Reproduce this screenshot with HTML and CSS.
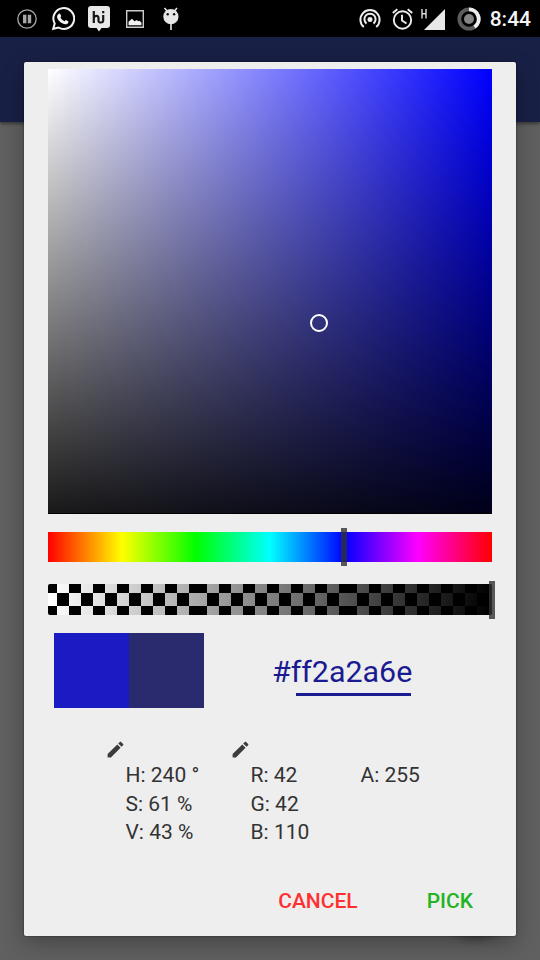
FILE: index.html
```html
<!DOCTYPE html>
<html lang="en">
<head>
<meta charset="utf-8">
<title>Color picker</title>
<link rel="stylesheet" href="styles.css">
</head>
<body>
<header class="status">
  <div class="notifications">
    <svg class="i-pause" width="20" height="20" viewBox="0 0 20 20"><circle cx="10" cy="10" r="9.2" fill="none" stroke="#a8a8a8" stroke-width="1.300"/><path d="M6 5.800h3.400v8.400H6zM10.800 5.800h3.400v8.400h-3.400z" fill="#a8a8a8"/></svg>
    <svg class="i-phone" width="24" height="24" viewBox="0 0 24 24"><path d="M2.2 21.8 3.7 16.600A10.400 10.400 0 1 1 7.500 20.500Z" fill="none" stroke="#f2f2f2" stroke-width="2"/><path d="M7.200 7.300c.8-1.100 1.900-.9 2.200-.1l.8 1.900c.2.5-.8 1.200-.7 1.500.9 1.700 2.200 2.900 4 3.600.5.200 1-1.300 1.500-1.100l2.200 1.100c.6.3.1 2-.8 2.600-1.400.9-3.200.5-5.200-.5-2.500-1.300-4.500-3.900-5-5.600-.4-1.400.1-2.600 1-3.400z" fill="#f2f2f2"/></svg>
    <svg class="i-hi" width="24" height="27" viewBox="0 0 24 27"><path d="M4 1h16a3 3 0 0 1 3 3v16a3 3 0 0 1-3 3h-5.500L12 26.500 9.500 23H4a3 3 0 0 1-3-3V4a3 3 0 0 1 3-3z" fill="#e8e8e8"/><path d="M6.800 6v12M6.800 13c1-3 4.700-3 4.700.3v2.500c0 2.300 4.700 2.300 4.700-.3V10M16.200 6v2.200" fill="none" stroke="#171717" stroke-width="2.200"/></svg>
    <svg class="i-image" width="18" height="18" viewBox="0 0 18 18"><path d="M.7.7h16.600v16.600H.7z" fill="none" stroke="#ccc" stroke-width="1.400"/><path d="M2.500 15.200v-3.500l3.500-3 2.500 2.600 2.500-1.300 1 1.300 1.500-.5 2 2v2.400z" fill="#f2f2f2"/></svg>
    <svg class="i-droid" width="18" height="24" viewBox="0 0 18 24"><path d="m2.500 1 3 3.500M15 1l-3 3.500M9 17v6" stroke="#e6e6e6" stroke-width="1.600"/><circle cx="8.900" cy="9.700" r="7.600" fill="#e6e6e6"/><circle cx="5.700" cy="7.300" r="1.200" fill="#111"/><circle cx="12.100" cy="7.300" r="1.200" fill="#111"/></svg>
  </div>
  <div class="system">
    <svg class="i-cast" width="22" height="22" viewBox="0 0 22 22" fill="none" stroke="#eee" stroke-width="2"><path d="M4.800 19A9.600 9.600 0 1 1 17.200 19M7.500 15.600A5.600 5.600 0 1 1 14.500 15.600"/><circle cx="11" cy="11.500" r="2.500" fill="#eee" stroke="none"/></svg>
    <svg class="i-alarm" width="21" height="22" viewBox="0 0 21 22" fill="none" stroke="#eee" stroke-width="1.900"><circle cx="10.500" cy="12" r="8.700"/><path d="M.8 5 5.300 1.200M20.200 5l-4.500-3.800M10 6.800v5.700l4.500 3"/></svg>
    <svg class="i-network" width="6" height="10" viewBox="0 0 6 10"><path d="M1 0v9.500M5 0v9.500M1 4.700h4" fill="none" stroke="#ddd" stroke-width="1.400"/></svg>
    <svg class="i-signal" width="21" height="21" viewBox="0 0 21 21"><path d="M21 0v21H0z" fill="#e8e8e8"/></svg>
    <svg class="i-battery" width="24" height="24" viewBox="0 0 24 24"><circle cx="12" cy="12" r="9.700" fill="none" stroke="#5c5c5c" stroke-width="3.800"/><path d="M12 2.300A9.700 9.700 0 0 1 17.500 20" fill="none" stroke="#eee" stroke-width="3.800"/><circle cx="12" cy="12" r="5" fill="#858585"/></svg>
    <span class="clock">8:44</span>
  </div>
</header>
<div class="appbar"></div>
<div class="fab"></div>
<main class="dialog">
  <div class="field"><i class="cursor"></i></div>
  <div class="hue"><i class="thumb hue-thumb"></i></div>
  <div class="alpha">
    <svg width="444" height="31" viewBox="0 0 444 31"><defs>
      <pattern id="checks" width="150" height="31" patternUnits="userSpaceOnUse">
        <rect width="150" height="31" fill="#fff"/>
        <path id="odd" d="M0 0h9v9H0zM21 0h12v9H21zM45 0h12v9H45zM69 0h12v9H69zM93 0h12v9H93zM117 0h12v9h-12zM141 0h9v9h-9z"/>
        <use href="#odd" y="22"/>
        <path d="M9 9h12v13H9zM33 9h12v13H33zM57 9h12v13H57zM81 9h12v13H81zM105 9h12v13h-12zM129 9h12v13h-12z"/>
      </pattern>
      <linearGradient id="fade"><stop offset="0" stop-opacity="0"/><stop offset="1"/></linearGradient></defs>
      <rect width="444" height="31" rx="2" fill="url(#checks)"/><rect width="444" height="31" rx="2" fill="url(#fade)"/></svg>
    <i class="thumb alpha-thumb"></i>
  </div>
  <div class="summary">
    <div class="swatches"><i class="old"></i><i class="new"></i></div>
    <div class="hex"><span>#ff2a2a6e</span><i></i></div>
  </div>
  <div class="values">
    <div class="group"><svg class="pencil" viewBox="0 0 24 24"><path d="M3 17.250V21h3.750L17.810 9.940l-3.750-3.750zM20.710 7.040a1 1 0 0 0 0-1.410l-2.340-2.340a1 1 0 0 0-1.410 0l-1.830 1.830 3.750 3.750z"/></svg><p>H: 240 °</p><p>S: 61 %</p><p>V: 43 %</p></div>
    <div class="group"><svg class="pencil" viewBox="0 0 24 24"><path d="M3 17.250V21h3.750L17.810 9.940l-3.750-3.750zM20.710 7.040a1 1 0 0 0 0-1.410l-2.340-2.340a1 1 0 0 0-1.410 0l-1.830 1.830 3.750 3.750z"/></svg><p>R: 42</p><p>G: 42</p><p>B: 110</p></div>
    <div class="group last"><p>A: 255</p></div>
  </div>
  <div class="actions"><span class="cancel">CANCEL</span><span class="pick">PICK</span></div>
</main>
</body>
</html>
```

FILE: styles.css
```css
* { box-sizing: border-box; }
body { margin: 0; width: 540px; height: 960px; overflow: hidden; position: relative; background: #606060; font-family: Roboto, sans-serif; }
i { display: block; }
svg { display: block; flex: none; }
p { margin: 0; }
.status { height: 37px; background: #000; display: flex; justify-content: space-between; padding: 0 9px 0 17px; }
.notifications, .system { display: flex; align-items: flex-start; }
.i-pause { margin-top: 9px; }
.i-phone { margin: 7px 0 0 14px; }
.i-hi { margin: 5px 0 0 12px; }
.i-image { margin: 10px 0 0 15px; }
.i-droid { margin: 7px 0 0 18px; }
.i-cast { margin-top: 8px; }
.i-alarm { margin: 8px 0 0 11px; }
.i-network { margin: 9px 0 0 8px; }
.i-signal { margin: 9px 0 0 -3px; }
.i-battery { margin: 7px 0 0 12px; }
.clock { color: #f5f5f5; font-size: 21px; line-height: 39px; font-weight: 500; margin-left: 9px; }
.appbar { height: 85px; background: #192046; box-shadow: 0 2px 3px rgba(0,0,0,.4); }
.fab { position: absolute; left: 439px; top: 866px; width: 72px; height: 74px; border-radius: 50%; background: #404040; filter: blur(4px); }
.dialog { position: absolute; left: 24px; top: 62px; width: 492px; height: 874px; padding: 7px 24px 0; background: #eee; border-radius: 2px; box-shadow: 0 7px 22px rgba(0,0,0,.3), 0 0 2px rgba(0,0,0,.6); }
.field { position: relative; height: 445px; border-bottom: 1px solid #000; background: linear-gradient(transparent, rgba(0,0,0,.9)), linear-gradient(to right, #fff, #00f); }
.cursor { position: absolute; left: 262px; top: 245px; width: 18px; height: 18px; border: 2px solid #fff; border-radius: 50%; }
.hue { position: relative; height: 30px; margin-top: 18px; background: linear-gradient(to right, red, #ff0, lime, cyan, blue, magenta, red); }
.alpha { position: relative; height: 31px; margin-top: 22px; }
.thumb { position: absolute; width: 6px; height: 38px; top: -4px; background: rgba(50,50,50,.8); }
.hue-thumb { left: 293px; }
.alpha-thumb { left: 441px; top: -3px; }
.summary { display: flex; margin: 18px 0 0 6px; height: 76px; }
.swatches { display: flex; width: 150px; height: 75px; }
.swatches i { flex: 1; }
.old { background: #1b1bc4; }
.new { background: #2a2a6e; }
.hex { margin-left: 68px; width: 140px; padding-top: 20px; color: #1a1a91; font-size: 30.400px; line-height: 38px; }
.hex span { display: block; white-space: nowrap; }
.hex i { margin: 2px 1px 0 24px; height: 3px; background: #1a1a91; }
.values { display: flex; padding: 30px 0 0 57px; height: 137px; color: #333; }
.group { width: 125px; padding-left: 20.500px; font-size: 21px; line-height: 28.500px; }
.pencil { width: 21px; height: 21px; margin: 0 0 1px -21px; fill: #3c3c3c; }
.last { width: 100px; padding: 22px 0 0 5.500px; }
.actions { display: flex; justify-content: flex-end; gap: 70px; padding: 43px 19px 0 0; font-size: 21px; line-height: 24px; font-weight: 500; }
.cancel { color: #ff3030; margin-right: -1px; }
.pick { color: #22b422; }
```
